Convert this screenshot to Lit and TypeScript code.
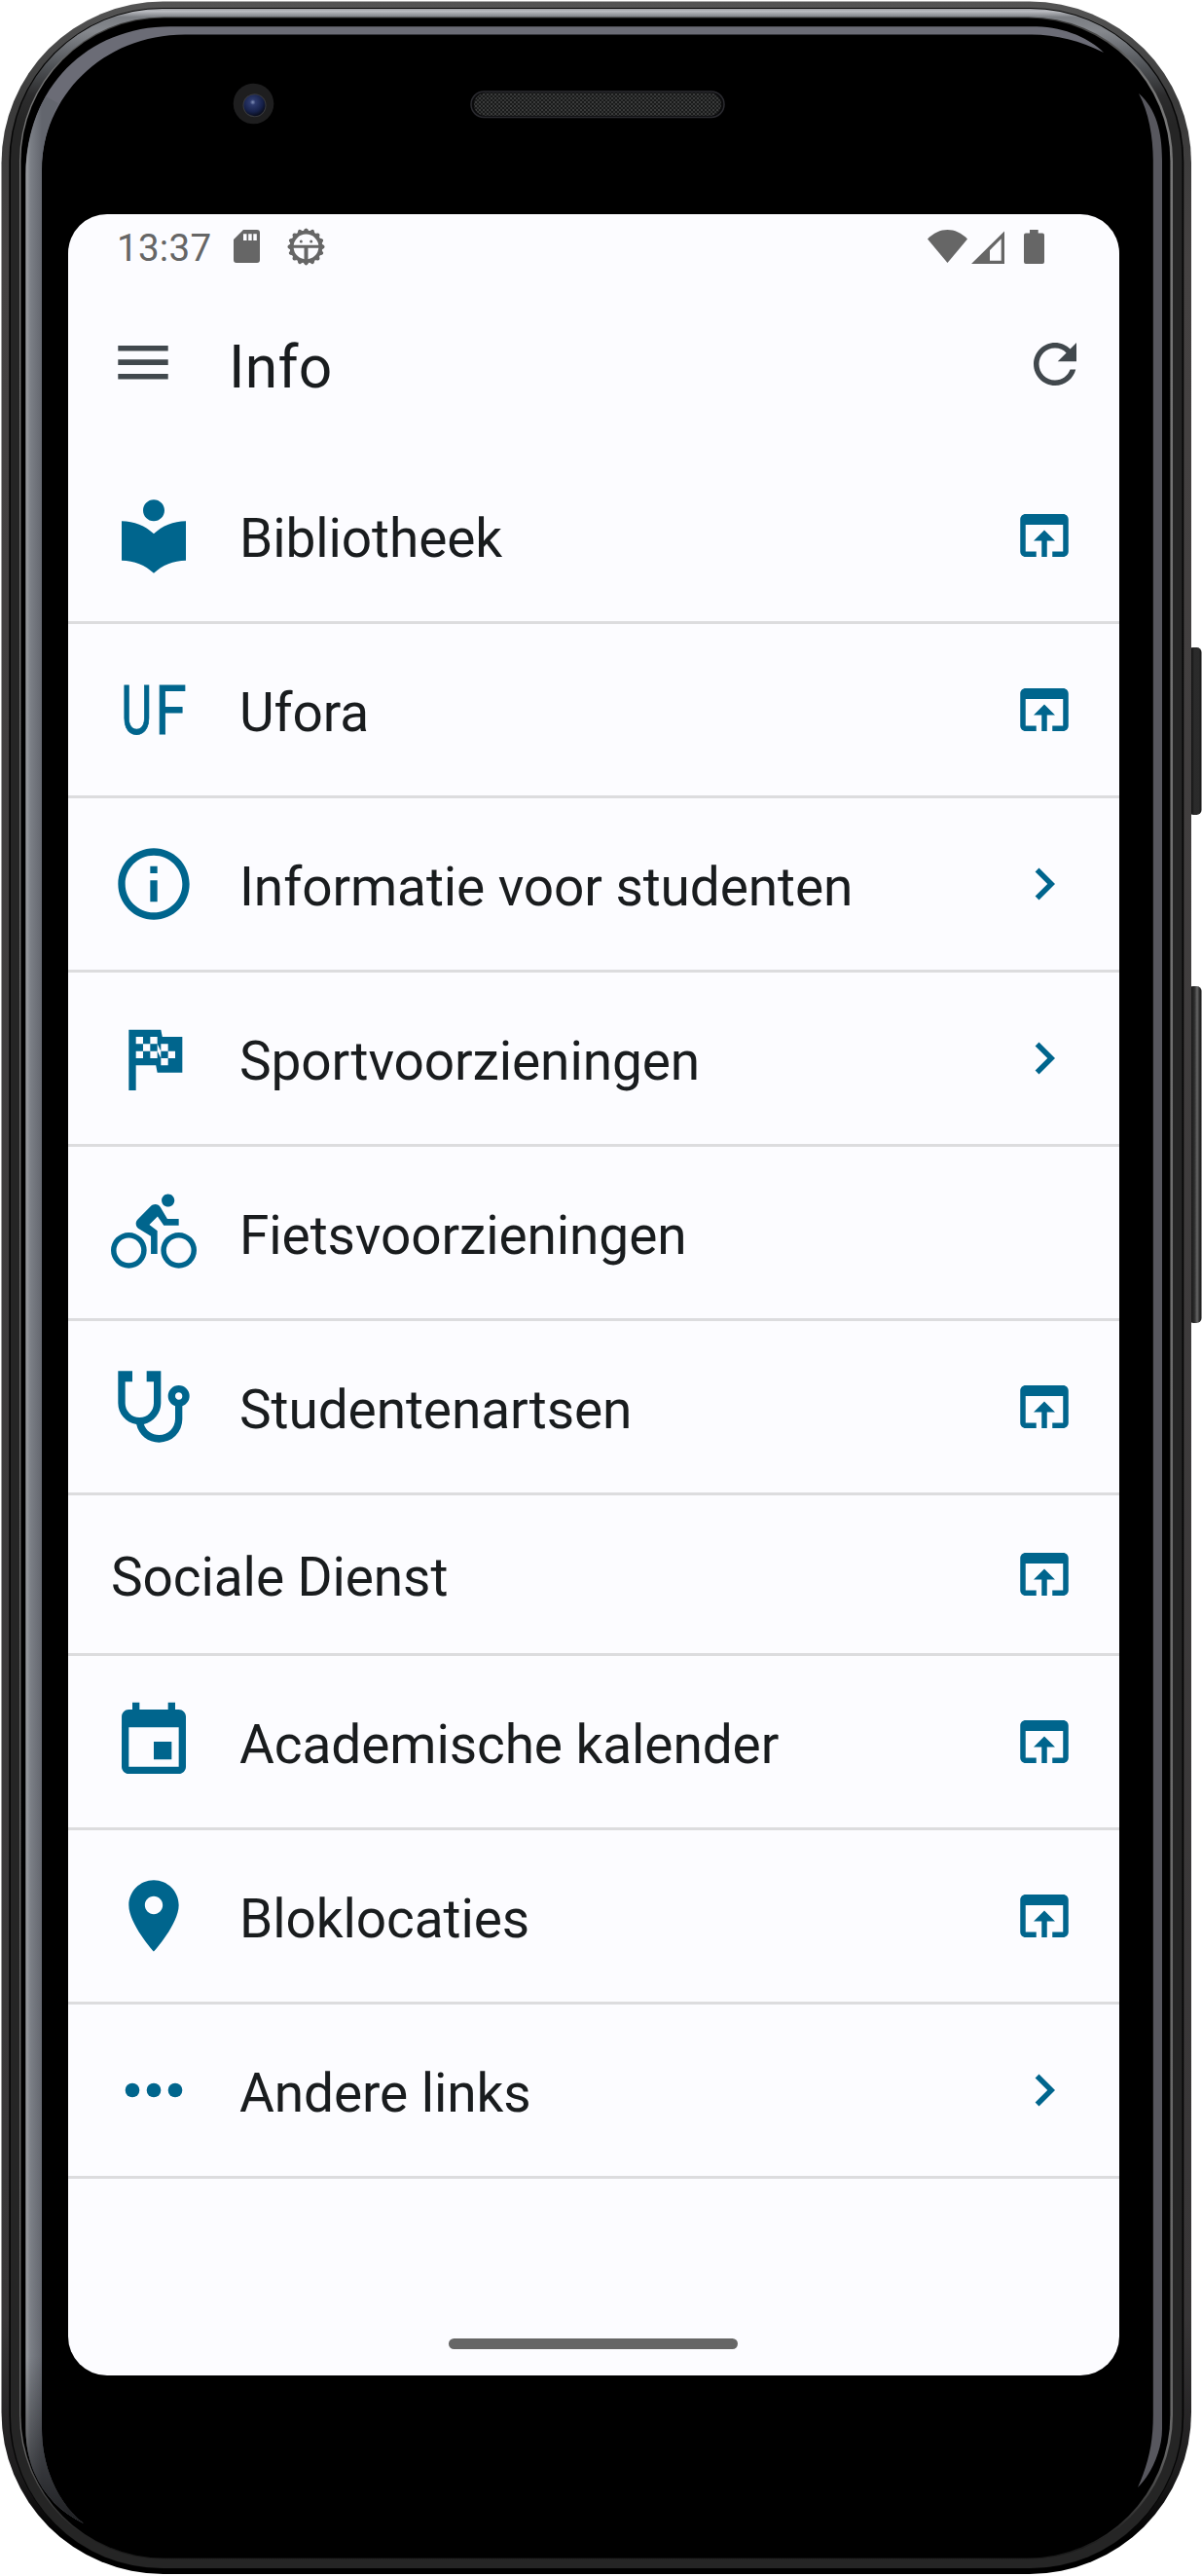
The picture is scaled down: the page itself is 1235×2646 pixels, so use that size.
import { LitElement, html, css, svg, nothing, type SVGTemplateResult } from "lit";
import { customElement, property } from "lit/decorators.js";

type Trailing = "open" | "chevron" | "none";

interface InfoLink {
  label: string;
  icon?: string;
  trailing: Trailing;
}

const LINKS: InfoLink[] = [
  { label: "Bibliotheek", icon: "library", trailing: "open" },
  { label: "Ufora", icon: "ufora", trailing: "open" },
  { label: "Informatie voor studenten", icon: "info", trailing: "chevron" },
  { label: "Sportvoorzieningen", icon: "flag", trailing: "chevron" },
  { label: "Fietsvoorzieningen", icon: "bike", trailing: "none" },
  { label: "Studentenartsen", icon: "stethoscope", trailing: "open" },
  { label: "Sociale Dienst", trailing: "open" },
  { label: "Academische kalender", icon: "event", trailing: "open" },
  { label: "Bloklocaties", icon: "place", trailing: "open" },
  { label: "Andere links", icon: "more", trailing: "chevron" },
];

/* All glyphs are drawn on a 24 unit grid. */
const ICONS: Record<string, SVGTemplateResult> = {
  library: svg`<path d="M12 11.55C9.64 9.35 6.48 8 3 8v11c3.48 0 6.64 1.35 9 3.55 2.36-2.19 5.52-3.55 9-3.55V8c-3.48 0-6.64 1.35-9 3.55zM12 8c1.66 0 3-1.34 3-3s-1.34-3-3-3-3 1.34-3 3 1.34 3 3 3z"/>`,
  ufora: svg`<g font-family="Roboto, sans-serif" font-size="19.3" stroke="currentColor" stroke-width=".25">
      <text transform="translate(2.88 18.95) scale(.69 1)">U</text>
      <text transform="translate(12.35 18.95) scale(.83 1)">F</text></g>`,
  info: svg`<path d="M11 7h2v2h-2zm0 4h2v6h-2zm1-9C6.48 2 2 6.48 2 12s4.480 10 10 10 10-4.480 10-10S17.520 2 12 2zm0 18c-4.410 0-8-3.590-8-8s3.590-8 8-8 8 3.590 8 8-3.590 8-8 8z"/>`,
  flag: svg`<path fill-rule="evenodd" d="M14.4,6H20V16H13L12.6,14H7V21H5V4H14L14.4,6M14,14H16V12H18V10H16V8H14V10L13,8V6H11V8H9V6H7V8H9V10H7V12H9V10H11V12H13V10L14,12V14M11,10V8H13V10H11M14,10H16V12H14V10Z"/>`,
  bike: svg`<path d="M5,20.5A3.5,3.5 0 0,1 1.5,17A3.5,3.5 0 0,1 5,13.5A3.5,3.5 0 0,1 8.5,17A3.5,3.5 0 0,1 5,20.5M5,12A5,5 0 0,0 0,17A5,5 0 0,0 5,22A5,5 0 0,0 10,17A5,5 0 0,0 5,12M14.8,10H19V8.2H15.8L13.86,4.93C13.57,4.43 13,4.1 12.4,4.1C11.93,4.1 11.5,4.29 11.2,4.6L7.5,8.29C7.19,8.6 7,9 7,9.5C7,10.13 7.33,10.66 7.85,10.97L11.2,13V18H13V11.5L10.75,9.85L13.07,7.5M19,20.5A3.5,3.5 0 0,1 15.5,17A3.5,3.5 0 0,1 19,13.5A3.5,3.5 0 0,1 22.5,17A3.5,3.5 0 0,1 19,20.5M19,12A5,5 0 0,0 14,17A5,5 0 0,0 19,22A5,5 0 0,0 24,17A5,5 0 0,0 19,12M16,4.8C17,4.8 17.8,4 17.8,3C17.8,2 17,1.2 16,1.2C15,1.2 14.2,2 14.2,3C14.2,4 15,4.8 16,4.8Z"/>`,
  stethoscope: svg`<path d="M19,8C19.56,8 20,8.43 20,9A1,1 0 0,1 19,10C18.43,10 18,9.55 18,9C18,8.43 18.43,8 19,8M2,2V11C2,13.96 4.19,16.5 7.14,16.91C7.76,19.92 10.42,22 13.5,22A6.5,6.5 0 0,0 20,15.5V11.81C21.16,11.39 22,10.29 22,9A3,3 0 0,0 19,6A3,3 0 0,0 16,9C16,10.29 16.84,11.4 18,11.81V15.41C18,17.91 16,19.91 13.5,19.91C11.5,19.91 9.82,18.7 9.22,16.9C12,16.3 14,13.8 14,11V2H10V5H12V11A4,4 0 0,1 8,15A4,4 0 0,1 4,11V5H6V2H2Z"/>`,
  event: svg`<path d="M17 12h-5v5h5v-5zM16 1v2H8V1H6v2H5c-1.11 0-1.99.9-1.99 2L3 19c0 1.100.89 2 2 2h14c1.100 0 2-.9 2-2V5c0-1.100-.9-2-2-2h-1V1h-2zm3 18H5V8h14v11z"/>`,
  place: svg`<path d="M12 2C8.130 2 5 5.130 5 9c0 5.250 7 13 7 13s7-7.750 7-13c0-3.870-3.130-7-7-7zm0 9.500c-1.380 0-2.500-1.120-2.500-2.500s1.120-2.500 2.500-2.500 2.500 1.120 2.500 2.500-1.120 2.500-2.500 2.500z"/>`,
  more: svg`<circle cx="6" cy="12" r="2"/><circle cx="12" cy="12" r="2"/><circle cx="18" cy="12" r="2"/>`,
  open: svg`<path d="M19 4H5c-1.110 0-2 .9-2 2v12c0 1.100.89 2 2 2h4v-2H5V8h14v10h-4v2h4c1.100 0 2-.9 2-2V6c0-1.100-.89-2-2-2zm-7 6l-4 4h3v6h2v-6h3l-4-4z"/>`,
  chevron: svg`<path d="M10 6L8.590 7.410 13.170 12l-4.580 4.590L10 18l6-6z"/>`,
  refresh: svg`<path d="M17.650 6.350C16.200 4.900 14.210 4 12 4c-4.420 0-7.990 3.580-7.990 8s3.570 8 7.990 8c3.730 0 6.840-2.550 7.730-6h-2.080c-.82 2.330-3.040 4-5.650 4-3.310 0-6-2.690-6-6s2.690-6 6-6c1.660 0 3.140.69 4.220 1.780L13 11h7V4l-2.350 2.350z"/>`,
};

const glyph = (name: string, cls: string) =>
  html`<svg class=${cls} viewBox="0 0 24 24" fill="currentColor" aria-hidden="true">${ICONS[name]}</svg>`;

@customElement("info-row")
class InfoRow extends LitElement {
  @property({ attribute: false }) link!: InfoLink;

  static styles = css`
    :host {
      display: block;
      border-bottom: 3px solid #dcdcde;
    }
    .row {
      display: flex;
      align-items: center;
      height: 176px;
      padding: 0 44px;
      color: #00658d;
    }
    .row.plain {
      height: 162px;
    }
    .leading {
      width: 88px;
      height: 88px;
      margin-right: 44px;
      flex: none;
    }
    .label {
      flex: 1;
      padding-top: 6px;
      color: #191c1e;
      font-size: 55px;
      letter-spacing: -0.1px;
      line-height: 66px;
      white-space: nowrap;
    }
    .trailing {
      width: 66px;
      height: 66px;
      flex: none;
    }
  `;

  render() {
    const { icon, label, trailing } = this.link;
    return html`<div class="row ${icon ? "" : "plain"}">
      ${icon ? glyph(icon, "leading") : nothing}
      <span class="label">${label}</span>
      ${trailing === "none" ? nothing : glyph(trailing, "trailing")}
    </div>`;
  }
}

@customElement("status-bar")
class StatusBar extends LitElement {
  static styles = css`
    :host {
      display: flex;
      align-items: center;
      height: 66px;
      box-sizing: border-box;
      padding: 0 77px 0 50px;
      color: #666;
    }
    .time {
      width: 120px;
      padding-top: 4px;
      font-size: 38.5px;
      letter-spacing: 0.3px;
      line-height: 46px;
    }
    .push {
      flex: 1;
    }
    svg {
      display: block;
      flex: none;
    }
    .bug {
      margin-left: 28px;
    }
    .cell {
      margin: 1px 20px 0 3.5px;
    }
  `;

  render() {
    const teeth = Array.from({ length: 16 }, (_, i) => i * 22.5);
    return html`
      <span class="time">13:37</span>
      <svg width="27" height="34" viewBox="0 0 27 34" fill="currentColor">
        <path fill-rule="evenodd" d="M10 0H24a3 3 0 0 1 3 3V31a3 3 0 0 1-3 3H3a3 3 0 0 1-3-3V10ZM10 4.200V11h3.500V4.200ZM15.200 4.200V11h3.500V4.200ZM20.300 4.200V11h3.500V4.200Z" />
      </svg>
      <svg class="bug" width="39" height="39" viewBox="-19.500 -19.500 39 39" fill="none" stroke="currentColor">
        <circle r="14.800" stroke-width="3.800" />
        ${teeth.map(
          (a) => svg`<path d="M-3.200 -15.800L-1.400 -18.300Q0 -19.800 1.400 -18.300L3.200 -15.800Z" fill="currentColor" stroke="none" transform="rotate(${a})"/>`
        )}
        <path d="M-14 -.2H14" stroke-width="3" />
        <path d="M0 0V14" stroke-width="4" />
        <circle cx="-5.200" cy="-5.600" r="1.500" fill="currentColor" stroke="none" />
        <circle cx="5.200" cy="-5.600" r="1.500" fill="currentColor" stroke="none" />
      </svg>
      <span class="push"></span>
      <svg width="41" height="34" viewBox="0 0 41 34" fill="currentColor">
        <path d="M0 9.600C12 -3.200 29 -3.200 41 9.600L20.500 34Z" />
      </svg>
      <svg class="cell" width="34.500" height="34" viewBox="0 0 34.500 34" fill="currentColor">
        <path fill-rule="evenodd" d="M0 34L34.500 0V34ZM19 20V30.700H30.700V8.300Z" />
      </svg>
      <svg width="21" height="35" viewBox="0 0 21 35" fill="currentColor">
        <path d="M6 0H14.700V3.400H19a2 2 0 0 1 2 2V33a2 2 0 0 1-2 2H2a2 2 0 0 1-2-2V5.400a2 2 0 0 1 2-2H6Z" />
      </svg>
    `;
  }
}

@customElement("phone-frame")
class PhoneFrame extends LitElement {
  static styles = css`
    :host,
    svg {
      display: block;
    }
  `;

  render() {
    return html`<svg width="1235" height="2646" viewBox="0 0 1235 2646" aria-hidden="true">
      <defs>
        <linearGradient id="rim" x1="0" y1="0" x2="0" y2="2646" gradientUnits="userSpaceOnUse">
          <stop offset="0" stop-color="#555" />
          <stop offset=".04" stop-color="#3a3a3a" />
          <stop offset=".1" stop-color="#454242" />
          <stop offset=".9" stop-color="#383637" />
          <stop offset=".96" stop-color="#1d1c1d" />
          <stop offset=".985" stop-color="#000" />
        </linearGradient>
        <linearGradient id="band" x1="0" y1="8" x2="0" y2="128" gradientUnits="userSpaceOnUse">
          <stop offset="0" stop-color="#8f9195" />
          <stop offset=".03" stop-color="#babcc1" />
          <stop offset=".08" stop-color="#7b7e83" />
          <stop offset=".2" stop-color="#85888d" />
          <stop offset=".5" stop-color="#505357" />
          <stop offset=".75" stop-color="#2c2c2d" />
          <stop offset="1" stop-color="#252525" />
        </linearGradient>
        <linearGradient id="line" x1="0" y1="0" x2="0" y2="2646" gradientUnits="userSpaceOnUse">
          <stop offset="0" stop-color="#222" />
          <stop offset=".03" stop-color="#777" />
          <stop offset=".95" stop-color="#666" />
          <stop offset=".99" stop-color="#1a1a1a" />
        </linearGradient>
        <linearGradient id="glossX" x1="26" y1="0" x2="43" y2="0" gradientUnits="userSpaceOnUse">
          <stop offset="0" stop-color="#a3a5a8" />
          <stop offset=".3" stop-color="#7c8087" />
          <stop offset="1" stop-color="#63666e" />
        </linearGradient>
        <linearGradient id="fade" x1="0" y1="2420" x2="0" y2="2595" gradientUnits="userSpaceOnUse">
          <stop offset="0" stop-color="#000" stop-opacity="0" />
          <stop offset="1" stop-color="#000" stop-opacity=".7" />
        </linearGradient>
        <linearGradient id="key" x1="1223" y1="0" x2="1235" y2="0" gradientUnits="userSpaceOnUse">
          <stop offset="0" stop-color="#0c0c0c" />
          <stop offset=".35" stop-color="#2b2b2b" />
          <stop offset=".75" stop-color="#2a2a2a" />
          <stop offset="1" stop-color="#0e0e0e" />
        </linearGradient>
        <linearGradient id="rocker" x1="1222" y1="0" x2="1235" y2="0" gradientUnits="userSpaceOnUse">
          <stop offset="0" stop-color="#101010" />
          <stop offset=".4" stop-color="#2c2c2c" />
          <stop offset=".62" stop-color="#666" />
          <stop offset=".78" stop-color="#333" />
          <stop offset="1" stop-color="#0c0c0c" />
        </linearGradient>
        <radialGradient id="lens" cx=".42" cy=".35" r=".65">
          <stop offset="0" stop-color="#8290b8" />
          <stop offset=".2" stop-color="#2d3a6d" />
          <stop offset=".7" stop-color="#16214a" />
          <stop offset="1" stop-color="#090d1d" />
        </radialGradient>
        <pattern id="mesh" width="4" height="4" patternUnits="userSpaceOnUse">
          <rect width="4" height="4" fill="#1a1b1b" />
          <circle cx="1" cy="1" r=".8" fill="#626464" />
          <circle cx="3" cy="3" r=".8" fill="#525454" />
        </pattern>
      </defs>
      <rect x="1221" y="665" width="13.500" height="172" rx="5" fill="url(#key)" />
      <rect x="1221" y="1013" width="13.500" height="346" rx="5" fill="url(#rocker)" />
      <rect x="1.500" y="1.500" width="1222.500" height="2642.500" rx="166" fill="url(#rim)" />
      <rect x="9.300" y="8" width="1207" height="2630.500" rx="158" fill="#060606" />
      <rect x="11" y="9" width="1203.500" height="2629" rx="156" fill="url(#band)" />
      <rect x="20" y="17.500" width="1185" height="2611" rx="148" fill="url(#line)" />
      <rect x="21.400" y="18.500" width="1181" height="2609" rx="147" fill="#000" />
      <path fill="#6b6c76" d="M26.500 2495V180C26.500 90 90 27.300 175 27.300H1065C1095 28 1120 40 1134 54C1110 42 1085 35.500 1060 35.500H190C105 35.500 43 100 43 175V2495C43 2535 60 2572 86 2592C50 2575 26.500 2540 26.500 2495Z" />
      <path fill="url(#glossX)" d="M26.500 2495V180C26.500 150 34 122 47 99L60 106C49 127 43 150 43 175V2495C43 2535 60 2572 86 2592C50 2575 26.500 2540 26.500 2495Z" />
      <path fill="url(#fade)" d="M26 2420H43.500V2495C43.500 2535 60 2572 87 2592.500C50 2575.500 26 2540 26 2495Z" />
      <path fill="#57575e" d="M1170 96C1188 112 1194 135 1194 165V2495C1194 2520 1180 2545 1169 2555C1180 2530 1184.800 2510 1184.800 2480V165C1184.800 140 1180 115 1170 96Z" />
      <circle cx="260.500" cy="106.500" r="20.800" fill="#1e1e1f" />
      <circle cx="261.500" cy="108.300" r="12" fill="#38393d" />
      <circle cx="261.500" cy="108.300" r="11" fill="url(#lens)" />
      <rect x="484" y="94" width="260" height="26.500" rx="13.200" fill="#0b0b0c" stroke="#2b2b30" stroke-width="1.500" />
      <rect x="487" y="95.500" width="254" height="23.500" rx="11.700" fill="url(#mesh)" />
    </svg>`;
  }
}

@customElement("app-root")
class AppRoot extends LitElement {
  static styles = css`
    :host {
      display: grid;
      width: 1235px;
      height: 2646px;
      overflow: hidden;
      background: #fff;
      font-family: Roboto, sans-serif;
      font-weight: 400;
    }
    phone-frame,
    .screen {
      grid-area: 1 / 1;
    }
    .screen {
      display: flex;
      flex-direction: column;
      width: 1080px;
      height: 2220px;
      margin: 220px 0 0 70px;
      overflow: hidden;
      border-radius: 40px;
      background: #fcfcff;
    }
    .bar {
      display: flex;
      align-items: center;
      height: 176px;
      padding: 0 33px 0 44px;
      color: #41484d;
    }
    .tool {
      width: 66px;
      height: 66px;
      flex: none;
    }
    h1 {
      flex: 1;
      margin: 0 0 0 55px;
      padding-top: 8px;
      color: #191c1e;
      font-size: 60.5px;
      font-weight: 400;
      letter-spacing: 0.3px;
      line-height: 72px;
    }
    .list {
      flex: 1;
    }
    .pill {
      align-self: center;
      width: 297px;
      height: 11px;
      margin: 0 1px 27.500px 0;
      border-radius: 6px;
      background: #666;
    }
  `;

  render() {
    return html`
      <phone-frame></phone-frame>
      <main class="screen">
        <status-bar></status-bar>
        <header class="bar">
          <svg class="tool" viewBox="0 0 66 66" fill="currentColor" aria-hidden="true">
            <path d="M7.300 14H58.700V19.500H7.300ZM7.300 28.300H58.700V34H7.300ZM7.300 43H58.700V48.600H7.300Z" />
          </svg>
          <h1>Info</h1>
          ${glyph("refresh", "tool")}
        </header>
        <section class="list">
          ${LINKS.map((link) => html`<info-row .link=${link}></info-row>`)}
        </section>
        <div class="pill"></div>
      </main>
    `;
  }
}
